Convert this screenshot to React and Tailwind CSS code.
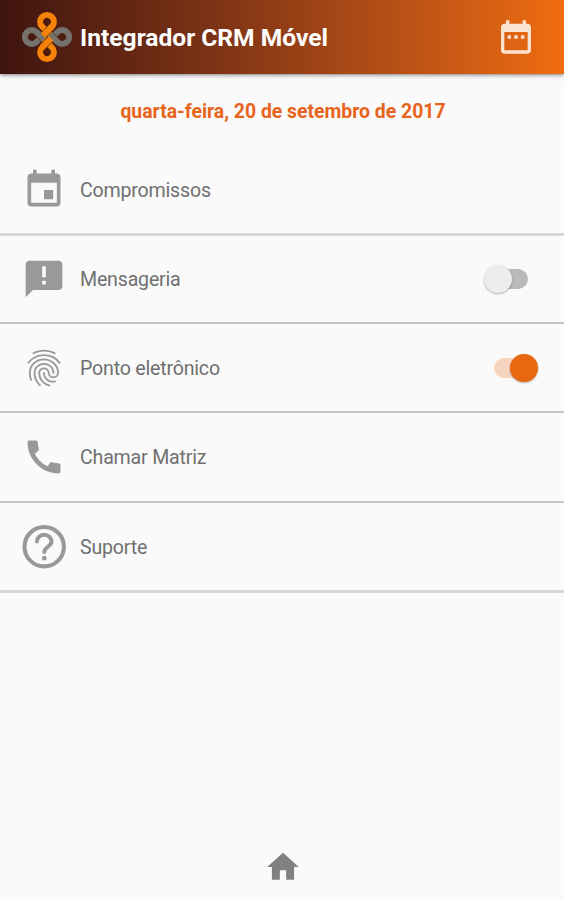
import React, { useState } from 'react';
import {
  MdDateRange,
  MdEvent,
  MdAnnouncement,
  MdFingerprint,
  MdCall,
  MdHome
} from 'react-icons/md';

function HelpIcon({ className }) {
  return (
    <svg className={className} viewBox="0 0 52 52" fill="none" stroke="currentColor">
      <circle cx="26.2" cy="25.7" r="19.7" strokeWidth="4.1" />
      <path
        d="M18.9 20.6a7.3 6.9 0 0 1 14.6 0c0 5-7.2 5.3-7.2 10.4"
        strokeWidth="4"
        strokeLinecap="round"
      />
      <circle cx="26.3" cy="37.2" r="2.4" fill="currentColor" stroke="none" />
    </svg>
  );
}

const menuItems = [
  { id: 'appointments', label: 'Compromissos', icon: MdEvent, iconClass: 'h-11 w-11', rowClass: 'h-[89px] border-b-3 border-[#d6d6d6]' },
  { id: 'messages', label: 'Mensageria', icon: MdAnnouncement, iconClass: 'h-11 w-11', rowClass: 'h-[88px] border-b-2 border-[#c4c4c4]', toggle: true },
  { id: 'clock', label: 'Ponto eletrônico', icon: MdFingerprint, iconClass: 'h-11 w-11', rowClass: 'h-[89px] border-b-2 border-[#c4c4c4]', toggle: true },
  { id: 'call', label: 'Chamar Matriz', icon: MdCall, iconClass: 'h-11 w-11', rowClass: 'h-[90px] border-b-2 border-[#c8c8c8]' },
  { id: 'support', label: 'Suporte', icon: HelpIcon, iconClass: 'h-[52px] w-[52px]', rowClass: 'h-[90px] border-b-3 border-[#d8d8d8]' }
];

const logoLoops = [
  { angle: 90, color: '#75716d' },
  { angle: 270, color: '#75716d' },
  { angle: 0, color: '#f58309' },
  { angle: 180, color: '#f58309' }
];

function Logo() {
  return (
    <svg className="h-[52px] w-[50px] shrink-0" viewBox="-0.5 0 51 52" fill="none" strokeWidth="6.2">
      {logoLoops.map(({ angle, color }) => (
        <g key={angle} transform={`rotate(${angle} 25 26)`}>
          <path d="M22 23.4L29.95 15.45A7 7 0 1 0 20.05 15.45L28 23.4" stroke={color} />
          {/* Gap beside the strand that lies on top */}
          <path d="M28.2 17.2L22 23.4" stroke="#6b3410" strokeWidth="7.4" />
          <path d="M29.95 15.45L20.8 24.6" stroke={color} />
        </g>
      ))}
    </svg>
  );
}

function Toggle({ checked, onChange, label }) {
  return (
    <button
      type="button"
      role="switch"
      aria-checked={checked}
      aria-label={label}
      onClick={onChange}
      className={`relative h-7 w-11 ${checked ? 'mr-[26px]' : 'mr-9'}`}
    >
      <span
        className={`absolute top-1 h-5 w-[34px] rounded-full ${checked ? 'left-0 bg-[#f8d3bd]' : 'right-0 bg-[#b9b9b9]'}`}
      ></span>
      <span
        className={`absolute top-0 h-7 w-7 rounded-full shadow-[0_1px_2px_rgba(0,0,0,0.3)] ${checked ? 'right-0 bg-[#e8680f]' : 'left-0 bg-[#ececec]'}`}
      ></span>
    </button>
  );
}

function App() {
  const [enabled, setEnabled] = useState({ messages: false, clock: true });

  const handleToggle = (id) => {
    setEnabled({ ...enabled, [id]: !enabled[id] });
  };

  return (
    <div className="flex h-[900px] w-full flex-col bg-[#fafafa] font-['Roboto',sans-serif]">
      {/* Header */}
      <header className="flex h-[74px] shrink-0 items-center bg-linear-to-r from-[#3f150e] to-[#f06c10] pl-[22px] pr-7 shadow-[0_1px_4px_rgba(0,0,0,0.5)]">
        <Logo />
        <h1 className="ml-2 flex-1 pt-0.5 text-[24.6px] leading-8 font-bold text-white">Integrador CRM Móvel</h1>
        <MdDateRange className="h-10 w-10 text-[#fce3d0]" />
      </header>

      <p className="mt-6 h-7 pl-0.5 text-center text-[19.4px] leading-7 font-bold text-[#e8641b]">
        quarta-feira, 20 de setembro de 2017
      </p>

      {/* Menu */}
      <ul className="mt-[21px]">
        {menuItems.map(({ id, label, icon: Icon, iconClass, rowClass, toggle }) => (
          <li key={id} className={`flex items-center ${rowClass}`}>
            <span className="ml-[18px] flex w-[52px] justify-center">
              <Icon className={`text-[#999999] ${iconClass}`} />
            </span>
            <span className="ml-2.5 flex-1 pt-0.5 text-[19.6px] leading-7 tracking-[-0.2px] text-[#707070]">{label}</span>
            {toggle && (
              <Toggle checked={enabled[id]} onChange={() => handleToggle(id)} label={label} />
            )}
          </li>
        ))}
      </ul>

      {/* Bottom navigation */}
      <nav className="mt-auto flex justify-center pb-3.5 pl-px">
        <MdHome className="h-[38px] w-[38px] text-[#808080]" />
      </nav>
    </div>
  );
}

export default App;
